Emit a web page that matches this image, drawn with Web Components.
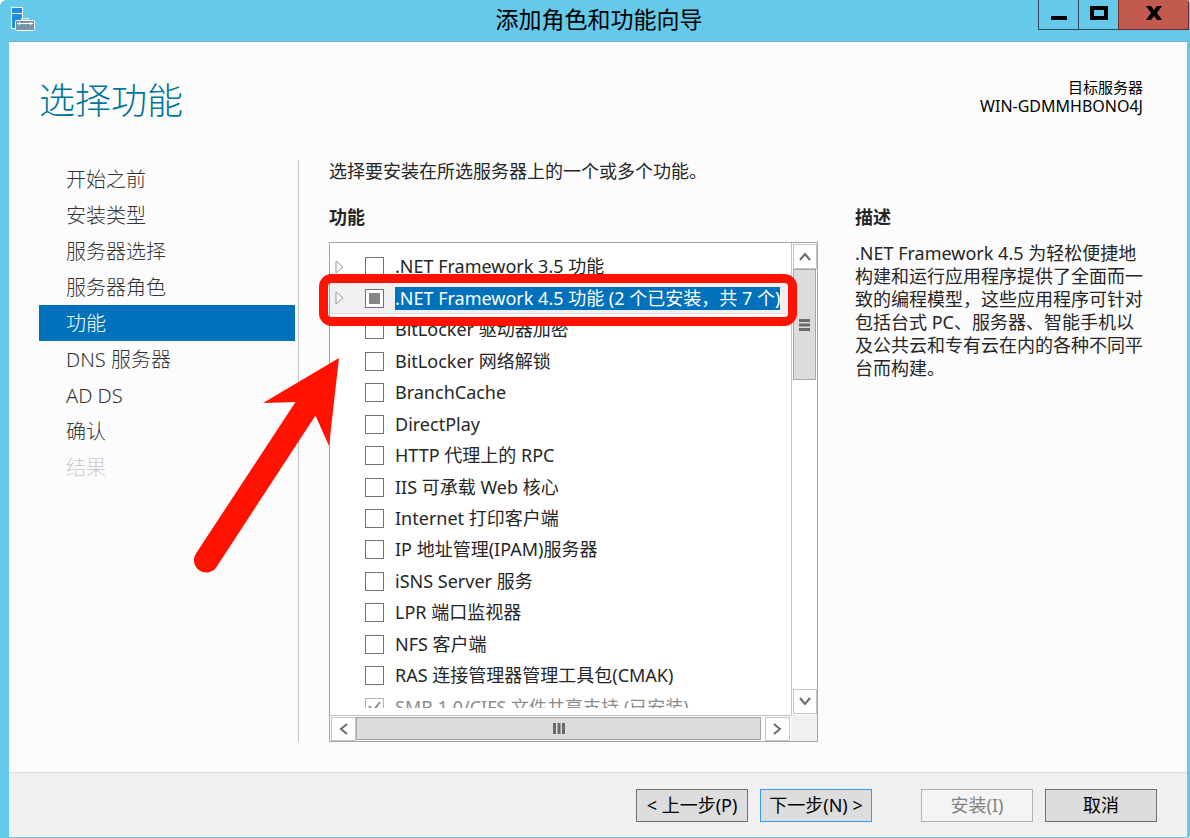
<!DOCTYPE html>
<html lang="zh-CN">
<head>
<meta charset="utf-8">
<meta name="viewport" content="width=device-width, initial-scale=1">
<title>添加角色和功能向导</title>
<style>
    body {
        margin: 0;
        background: #fff;
        color: #262626;
        font: 18px/23px "Noto Sans", "Noto Sans CJK SC", sans-serif;
    }
</style>
</head>
<body>
<wizard-window>
    <title-bar slot="title">添加角色和功能向导</title-bar>
    <page-header slot="header" server="WIN-GDMMHBONO4J">选择功能</page-header>
    <step-list slot="steps">
        <step-item>开始之前</step-item>
        <step-item>安装类型</step-item>
        <step-item>服务器选择</step-item>
        <step-item>服务器角色</step-item>
        <step-item current>功能</step-item>
        <step-item>DNS 服务器</step-item>
        <step-item>AD DS</step-item>
        <step-item>确认</step-item>
        <step-item disabled>结果</step-item>
    </step-list>
    <feature-page>
        <span slot="intro">选择要安装在所选服务器上的一个或多个功能。</span>
        <feature-list slot="list">
            <feature-item expandable>.NET Framework 3.5 功能</feature-item>
            <feature-item expandable selected state="partial">.NET Framework 4.5 功能 (2 个已安装，共 7 个)</feature-item>
            <feature-item>BitLocker 驱动器加密</feature-item>
            <feature-item>BitLocker 网络解锁</feature-item>
            <feature-item>BranchCache</feature-item>
            <feature-item>DirectPlay</feature-item>
            <feature-item>HTTP 代理上的 RPC</feature-item>
            <feature-item>IIS 可承载 Web 核心</feature-item>
            <feature-item>Internet 打印客户端</feature-item>
            <feature-item>IP 地址管理(IPAM)服务器</feature-item>
            <feature-item>iSNS Server 服务</feature-item>
            <feature-item>LPR 端口监视器</feature-item>
            <feature-item>NFS 客户端</feature-item>
            <feature-item>RAS 连接管理器管理工具包(CMAK)</feature-item>
            <feature-item state="checked" disabled>SMB 1.0/CIFS 文件共享支持 (已安装)</feature-item>
        </feature-list>
        <span slot="description">.NET Framework 4.5 为轻松便捷地<br>构建和运行应用程序提供了全面而一<br>致的编程模型，这些应用程序可针对<br>包括台式 PC、服务器、智能手机以<br>及公共云和专有云在内的各种不同平<br>台而构建。</span>
    </feature-page>
    <wizard-button slot="buttons">&lt; 上一步(P)</wizard-button>
    <wizard-button slot="buttons" primary>下一步(N) &gt;</wizard-button>
    <wizard-button slot="buttons" group disabled>安装(I)</wizard-button>
    <wizard-button slot="buttons">取消</wizard-button>
    <callout-mark slot="overlay"></callout-mark>
</wizard-window>

<script>
function attach(element, html) {
    const template = document.createElement('template');
    template.innerHTML = html;
    element.attachShadow({ mode: 'open' });
    element.shadowRoot.appendChild(template.content.cloneNode(true));
    return element.shadowRoot;
}

class WizardWindow extends HTMLElement {
    constructor() {
        super();
        attach(this, `
            <style>
                :host {
                    display: flex;
                    flex-direction: column;
                    position: relative;
                    box-sizing: border-box;
                    height: 100vh;
                    min-height: 640px;
                    padding: 0 3px 1px 9px;
                    background: #65c9ea;
                    border-radius: 6px 4px 3px 0;
                    overflow: hidden;
                }
                main {
                    flex: 1;
                    min-height: 0;
                    display: flex;
                    flex-direction: column;
                    padding: 0 44px 30px 30px;
                    background: #fcfcfc;
                    border-top: 1px solid #7fa9bd;
                }
                .columns {
                    flex: 1;
                    min-height: 0;
                    display: grid;
                    grid-template-columns: 260px minmax(0, 1fr);
                    gap: 30px;
                }
                footer {
                    display: flex;
                    justify-content: flex-end;
                    gap: 12px;
                    padding: 16px 30px 15px;
                    background: #f0f0f0;
                    border-top: 1px solid #dcdcdc;
                }
            </style>
            <slot name="title"></slot>
            <main>
                <slot name="header"></slot>
                <div class="columns">
                    <slot name="steps"></slot>
                    <slot></slot>
                </div>
            </main>
            <footer><slot name="buttons"></slot></footer>
            <slot name="overlay"></slot>
        `);
    }
}

class TitleBar extends HTMLElement {
    constructor() {
        super();
        attach(this, `
            <style>
                :host {
                    display: grid;
                    grid-template-columns: 1fr auto 1fr;
                    height: 41px;
                    margin-right: -2px;
                    color: #000;
                    font-size: 23px;
                    line-height: 38px;
                }
                .logo { margin: 7px 2px; }
                .controls {
                    display: flex;
                    justify-self: end;
                    height: 30px;
                }
                button {
                    display: flex;
                    align-items: center;
                    justify-content: center;
                    box-sizing: border-box;
                    width: 40px;
                    padding: 0 0 4px;
                    border: 1px solid #2b4b58;
                    border-width: 0 0 1px 1px;
                    background: none;
                }
                .close {
                    width: 71px;
                    border-color: #6c2c2a;
                    border-right-width: 1px;
                    background: #c35a50;
                }
            </style>
            <svg class="logo" width="24" height="24" viewBox="0 0 24 24" aria-hidden="true">
                <path d="M.5 .5h11v21H.5z" fill="#1f8ede" stroke="#fff"/>
                <path d="M1 6.500h10" stroke="#fff"/>
                <path d="M10.500 13.500v-2h7v2" fill="none" stroke="#e4edf2"/>
                <rect x="4.500" y="13.500" width="19" height="10" rx="1" fill="#7794a8" stroke="#fff"/>
                <path d="M6 16.500h16M8.500 15v3M19.500 15v3" stroke="#fff"/>
            </svg>
            <slot></slot>
            <div class="controls">
                <button aria-label="最小化"><svg width="16" height="14"><path d="M0 10h16v4H0z"/></svg></button>
                <button aria-label="最大化"><svg width="18" height="14"><path d="M2 2h14v10H2z" fill="none" stroke="#000" stroke-width="4"/></svg></button>
                <button class="close" aria-label="关闭"><svg width="16" height="14"><path d="M0 0h5l3 4 3-4h5l-5 7 5 7h-5l-3-4-3 4H0l5-7z"/></svg></button>
            </div>
        `);
    }
}

class PageHeader extends HTMLElement {
    constructor() {
        super();
        const root = attach(this, `
            <style>
                :host {
                    display: flex;
                    justify-content: space-between;
                    align-items: flex-start;
                    padding: 36px 0;
                }
                h1 {
                    margin: 0;
                    color: #00749a;
                    font-size: 36px;
                    font-weight: 300;
                    line-height: 46px;
                }
                p {
                    margin: 0;
                    color: #000;
                    font-size: 15px;
                    line-height: 19px;
                    text-align: right;
                }
                #server { font-size: 16px; }
            </style>
            <h1><slot></slot></h1>
            <p>目标服务器<br><span id="server"></span></p>
        `);
        root.getElementById('server').textContent = this.getAttribute('server');
    }
}

class StepList extends HTMLElement {
    constructor() {
        super();
        attach(this, `
            <style>
                :host {
                    display: block;
                    padding: 1px 3px 0 0;
                    border-right: 1px solid #c4c4c4;
                }
            </style>
            <nav><slot></slot></nav>
        `);
    }
}

class StepItem extends HTMLElement {
    constructor() {
        super();
        attach(this, `
            <style>
                :host { display: block; }
                a {
                    display: block;
                    padding: 2px 0 0 27px;
                    color: #333;
                    font-size: 20px;
                    font-weight: 300;
                    line-height: 34px;
                    text-decoration: none;
                }
                :host([current]) a { background: #0072bc; color: #fff; }
                :host([disabled]) a { color: #ccc; }
            </style>
            <a href="#"><slot></slot></a>
        `);
    }
}

class FeaturePage extends HTMLElement {
    constructor() {
        super();
        attach(this, `
            <style>
                :host {
                    display: flex;
                    flex-direction: column;
                    min-height: 0;
                }
                p { margin: 0; }
                .columns {
                    flex: 1;
                    min-height: 0;
                    display: grid;
                    grid-template-columns: 489fr 288fr;
                    gap: 37px;
                    padding-top: 23px;
                }
                section {
                    display: flex;
                    flex-direction: column;
                    min-width: 0;
                    min-height: 0;
                }
                h2 {
                    margin: 0 0 13px;
                    font-size: 18px;
                    font-weight: 700;
                    line-height: 23px;
                }
                .description { white-space: nowrap; }
            </style>
            <p><slot name="intro"></slot></p>
            <div class="columns">
                <section>
                    <h2>功能</h2>
                    <slot name="list"></slot>
                </section>
                <section>
                    <h2>描述</h2>
                    <p class="description"><slot name="description"></slot></p>
                </section>
            </div>
        `);
    }
}

class FeatureList extends HTMLElement {
    constructor() {
        super();
        attach(this, `
            <style>
                :host {
                    flex: 1;
                    min-height: 0;
                    display: grid;
                    grid-template-columns: minmax(0, 1fr) 26px;
                    grid-template-rows: minmax(0, 1fr) 26px;
                    border: 1px solid #a5a5a5;
                    background: #fff;
                }
                .viewport {
                    padding: 8px 3px 7px 0;
                    min-height: 0;
                    display: flex;
                }
                .clip { flex: 1; overflow: hidden; }
                .rows {
                    display: flex;
                    flex-direction: column;
                    height: 472px;
                }
                .bar {
                    display: flex;
                    box-sizing: border-box;
                    padding: 1px;
                    border: 0 solid #c0c0c0;
                }
                .vertical { flex-direction: column; border-left-width: 1px; }
                .horizontal { border-top-width: 1px; }
                .bar button {
                    display: flex;
                    align-items: center;
                    justify-content: center;
                    box-sizing: border-box;
                    flex: none;
                    width: 24px;
                    height: 24px;
                    padding: 0;
                    border: 1px solid #c6c6c6;
                    background: #fff;
                }
                .vertical button { height: 25px; }
                .horizontal button { width: 25px; }
                .thumb {
                    display: flex;
                    align-items: center;
                    justify-content: center;
                    box-sizing: border-box;
                    border: 1px solid #a6a6a6;
                    background: #dcdcdc;
                }
                .vertical .thumb { flex: 110; }
                .vertical .rest { flex: 310; }
                .horizontal .thumb { flex: 406; }
                .horizontal .rest { flex: 4; }
                .corner { background: #f0f0f0; }
                svg { fill: none; stroke: #6a6a6a; stroke-width: 2; }
            </style>
            <div class="viewport"><div class="clip"><div class="rows"><slot></slot></div></div></div>
            <div class="bar vertical">
                <button aria-label="向上"><svg width="12" height="9"><path d="M1 8l5-6 5 6"/></svg></button>
                <div class="thumb"><svg width="11" height="12"><path d="M0 1.500h11M0 6h11M0 10.500h11" stroke-width="3"/></svg></div>
                <div class="rest"></div>
                <button aria-label="向下"><svg width="12" height="9"><path d="M1 1l5 6 5-6"/></svg></button>
            </div>
            <div class="bar horizontal">
                <button aria-label="向左"><svg width="9" height="12"><path d="M8 1L2 6l6 5"/></svg></button>
                <div class="thumb"><svg width="12" height="11"><path d="M1.500 0v11M6 0v11M10.500 0v11" stroke-width="3"/></svg></div>
                <div class="rest"></div>
                <button aria-label="向右"><svg width="9" height="12"><path d="M1 1l6 5-6 5"/></svg></button>
            </div>
            <div class="corner"></div>
        `);
    }
}

class FeatureItem extends HTMLElement {
    constructor() {
        super();
        const root = attach(this, `
            <style>
                :host {
                    flex: 1;
                    display: grid;
                    grid-template-columns: 8px 19px auto;
                    justify-content: start;
                    align-items: center;
                    column-gap: 22px;
                    box-sizing: border-box;
                    padding-left: 5px;
                    white-space: nowrap;
                }
                :host([selected]) {
                    background: #f0f0f0;
                    box-shadow: inset 0 -1px #d9d9d9;
                }
                :host([disabled]) { color: #8c8c8c; }
                .expander { visibility: hidden; }
                :host([expandable]) .expander { visibility: visible; }
                input {
                    appearance: none;
                    box-sizing: border-box;
                    width: 19px;
                    height: 19px;
                    margin: 0;
                    border: 1px solid #707070;
                    background: #fff;
                }
                input:indeterminate { background: #868686; box-shadow: inset 0 0 0 3px #fff; }
                input:disabled { border-color: #b5b5b5; }
                .box { display: grid; }
                .box > * { grid-area: 1 / 1; }
                .tick { display: none; pointer-events: none; }
                :host([state=checked]) .tick { display: block; }
                label { margin-left: -11px; }
                :host([selected]) label { background: #0072bc; color: #fff; }
            </style>
            <svg class="expander" width="9" height="14" aria-hidden="true"><path d="M1 1l7 6-7 6z" fill="#fff" stroke="#969696"/></svg>
            <span class="box">
                <input type="checkbox" id="check">
                <svg class="tick" width="19" height="19"><path d="M4 8l4 5 7-9" fill="none" stroke="#8c8c8c" stroke-width="2"/></svg>
            </span>
            <label for="check"><slot></slot></label>
        `);
        const check = root.getElementById('check');
        check.checked = this.getAttribute('state') === 'checked';
        check.indeterminate = this.getAttribute('state') === 'partial';
        check.disabled = this.hasAttribute('disabled');
    }
}

class WizardButton extends HTMLElement {
    constructor() {
        super();
        const root = attach(this, `
            <style>
                :host { display: block; }
                :host([group]) { margin-left: 37px; }
                button {
                    box-sizing: border-box;
                    min-width: 112px;
                    height: 33px;
                    padding: 0 4px;
                    border: 1px solid #707070;
                    background: #ddd;
                    color: #000;
                    font: inherit;
                    white-space: nowrap;
                }
                :host([primary]) button { border-color: #3399ff; }
                button:disabled {
                    border-color: #adb2b5;
                    background: #f4f4f4;
                    color: #838383;
                }
            </style>
            <button><slot></slot></button>
        `);
        root.querySelector('button').disabled = this.hasAttribute('disabled');
    }
}

// Red frame and arrow drawn on top of the window
class CalloutMark extends HTMLElement {
    constructor() {
        super();
        attach(this, `
            <style>
                :host {
                    position: absolute;
                    left: 190px;
                    top: 270px;
                    pointer-events: none;
                }
                svg { display: block; }
            </style>
            <svg width="612" height="310" viewBox="190 270 612 310" aria-hidden="true">
                <rect x="323.500" y="278.500" width="469" height="43" rx="8" fill="none" stroke="#ff1200" stroke-width="9"/>
                <path d="M339 358L263 403L295.500 402L196 553.500A12 12 0 0 0 216.500 567L315.500 415.500L329 446z" fill="#ff1200"/>
            </svg>
        `);
    }
}

window.customElements.define('wizard-window', WizardWindow);
window.customElements.define('title-bar', TitleBar);
window.customElements.define('page-header', PageHeader);
window.customElements.define('step-list', StepList);
window.customElements.define('step-item', StepItem);
window.customElements.define('feature-page', FeaturePage);
window.customElements.define('feature-list', FeatureList);
window.customElements.define('feature-item', FeatureItem);
window.customElements.define('wizard-button', WizardButton);
window.customElements.define('callout-mark', CalloutMark);
</script>
</body>
</html>
